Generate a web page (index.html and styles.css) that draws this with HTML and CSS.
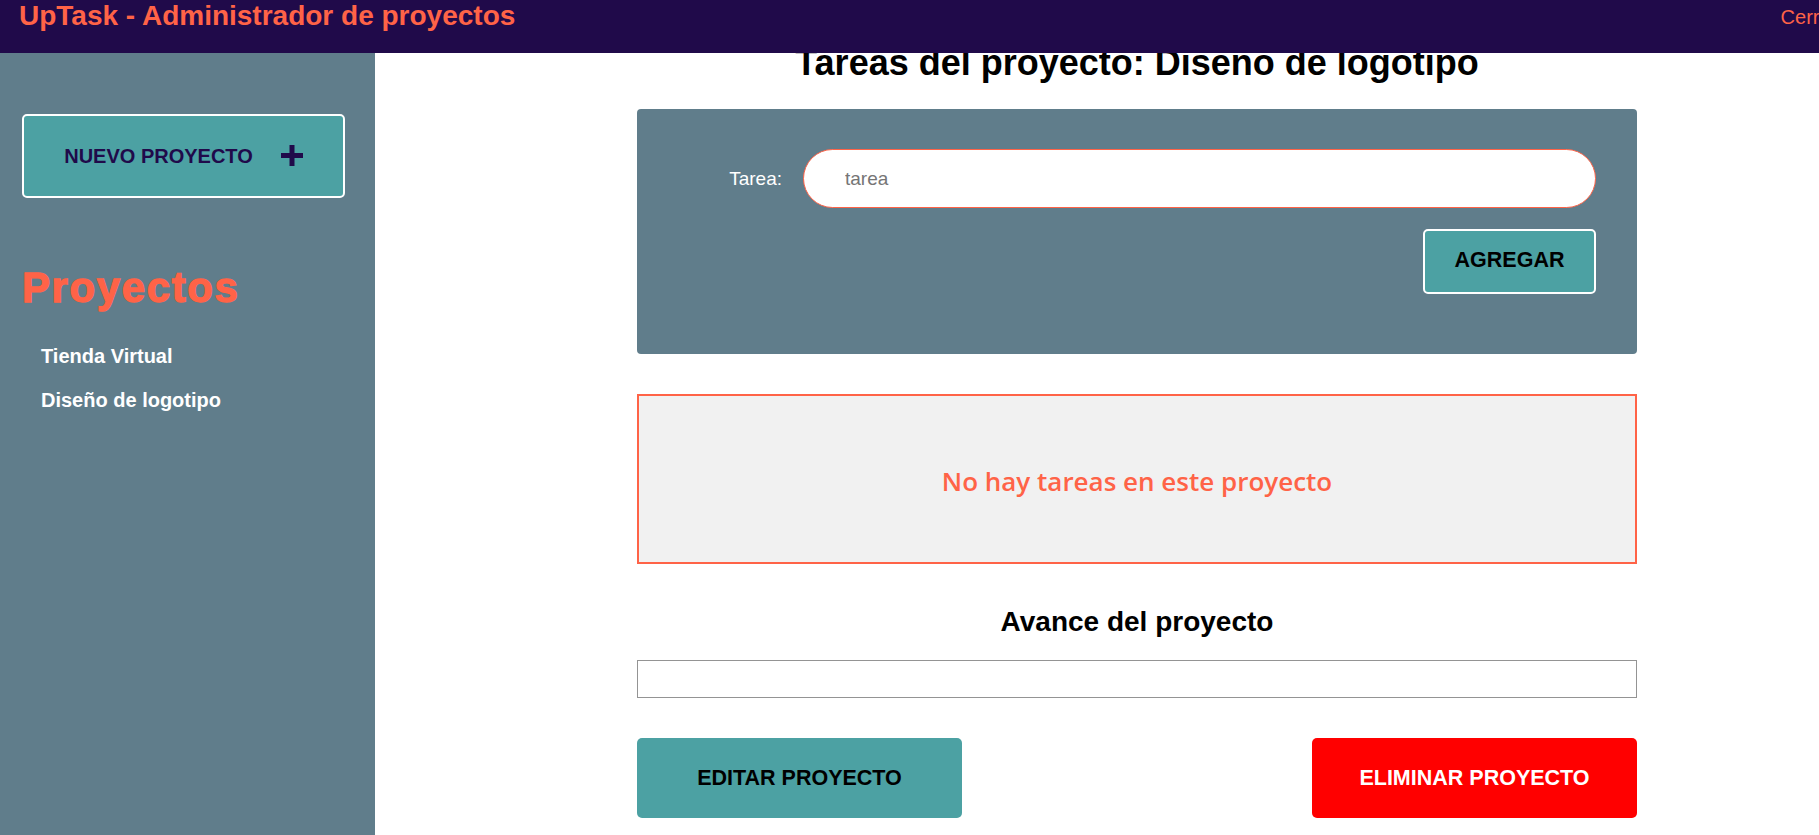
FILE: index.html
```html
<!DOCTYPE html>
<html lang="es">
<head>
<meta charset="utf-8">
<title>UpTask</title>
<link rel="stylesheet" href="styles.css">
</head>
<body>
<header class="topbar">
  <h1 class="brand">UpTask - Administrador de proyectos</h1>
  <a class="logout" href="#">Cerrar Sesión</a>
</header>
<div class="layout">
  <aside class="sidebar">
    <a class="new-project" href="#">
      <span>NUEVO PROYECTO</span>
      <svg class="plus" width="22" height="21" viewBox="0 0 22 21" aria-hidden="true"><rect x="0" y="8" width="22" height="5" fill="#200A4A"/><rect x="8.5" y="0" width="5" height="21" fill="#200A4A"/></svg>
    </a>
    <h2 class="sidebar-title">Proyectos</h2>
    <ul class="projects-list">
      <li><a href="#">Tienda Virtual</a></li>
      <li><a href="#">Diseño de logotipo</a></li>
    </ul>
  </aside>
  <main class="main">
    <div class="content">
      <h2 class="page-title">Tareas del proyecto: Diseño de logotipo</h2>
      <form class="task-form">
        <div class="field">
          <label for="tarea">Tarea:</label>
          <input id="tarea" type="text" placeholder="tarea">
        </div>
        <div class="form-actions">
          <button type="button" class="btn-add">AGREGAR</button>
        </div>
      </form>
      <div class="empty">
        <p>No hay tareas en este proyecto</p>
      </div>
      <h3 class="progress-title">Avance del proyecto</h3>
      <div class="progress"></div>
      <div class="project-actions">
        <button type="button" class="btn btn-edit">EDITAR PROYECTO</button>
        <button type="button" class="btn btn-delete">ELIMINAR PROYECTO</button>
      </div>
    </div>
  </main>
</div>
</body>
</html>
```
FILE: styles.css
```css
html, body {
  margin: 0;
  padding: 0;
  overflow: hidden;
}
body {
  font-family: "Liberation Sans", Arial, sans-serif;
  background: #ffffff;
  color: #000000;
}

.topbar {
  position: fixed;
  top: 0;
  left: 0;
  z-index: 10;
  width: 1924px;
  height: 53px;
  box-sizing: border-box;
  padding: 0 20px 0 19px;
  display: flex;
  justify-content: space-between;
  align-items: flex-start;
  background: #200A4A;
}
.brand {
  margin: 0;
  font-size: 28px;
  font-weight: bold;
  line-height: normal;
  color: #FF6347;
}
.logout {
  padding-top: 6px;
  font-size: 20px;
  color: #FF6347;
  text-decoration: none;
  line-height: normal;
}

/* Layout */
.layout {
  display: flex;
  min-height: 100vh;
}
.sidebar {
  width: 375px;
  flex-shrink: 0;
  box-sizing: border-box;
  padding: 114px 30px 0 22px;
  background: #607D8B;
}
.new-project {
  display: flex;
  align-items: center;
  justify-content: center;
  gap: 28px;
  height: 84px;
  box-sizing: border-box;
  border: 2px solid #ffffff;
  border-radius: 5px;
  background: #4CA1A3;
  color: #200A4A;
  font-weight: bold;
  font-size: 20px;
  text-decoration: none;
}
.plus {
  display: block;
  margin-top: -1px;
}
.sidebar-title {
  margin: 66px 0 0;
  font-size: 42px;
  line-height: normal;
  font-weight: 900;
  letter-spacing: 1.6px;
  color: #FF6347;
  -webkit-text-stroke: 1.3px #FF6347;
}
.projects-list {
  list-style: none;
  margin: 23px 0 0;
  padding: 0 0 0 19px;
}
.projects-list li {
  line-height: 42px;
}
.projects-list a {
  color: #ffffff;
  font-weight: bold;
  font-size: 20px;
  text-decoration: none;
}

/* Main */
.main {
  flex: 1;
  padding: 42px 0 0 80px;
}
.content {
  width: 1000px;
  margin: 0 auto;
}
.page-title {
  margin: 0 0 25px;
  text-align: center;
  font-size: 36px;
  line-height: normal;
  font-weight: bold;
}
.task-form {
  background: #607D8B;
  border-radius: 4px;
  padding: 40px 41px 60px 40px;
}
.field {
  display: flex;
  align-items: center;
  gap: 21px;
}
.field label {
  width: 105px;
  text-align: right;
  color: #ffffff;
  font-size: 19px;
}
.field input {
  flex: 1;
  height: 59px;
  box-sizing: border-box;
  border: 1px solid #FF6347;
  border-radius: 30px;
  padding: 0 41px;
  font-family: "Liberation Sans", Arial, sans-serif;
  font-size: 19px;
  background: #ffffff;
  outline: none;
}
.field input::placeholder {
  color: #757575;
}
.form-actions {
  display: flex;
  justify-content: flex-end;
  margin-top: 21px;
}
.btn-add {
  width: 173px;
  height: 65px;
  box-sizing: border-box;
  border: 2px solid #ffffff;
  border-radius: 5px;
  background: #4CA1A3;
  color: #000000;
  font-family: "Liberation Sans", Arial, sans-serif;
  font-weight: bold;
  font-size: 21.5px;
  padding: 0 0 2px;
}
.empty {
  margin-top: 40px;
  height: 170px;
  box-sizing: border-box;
  border: 2px solid #FF6347;
  background: #F1F1F1;
  display: flex;
  align-items: center;
  justify-content: center;
}
.empty p {
  margin: 4px 0 0;
  color: #FF6347;
  font-family: "Comic Sans MS", "Open Sans", sans-serif;
  font-weight: 600;
  font-size: 26px;
}
.progress-title {
  margin: 42px 0 22px;
  text-align: center;
  font-size: 28px;
  line-height: normal;
  font-weight: bold;
}
.progress {
  height: 38px;
  box-sizing: border-box;
  border: 1px solid #949494;
}
.project-actions {
  display: flex;
  justify-content: space-between;
  margin-top: 40px;
}
.btn {
  width: 325px;
  height: 80px;
  border: none;
  border-radius: 5px;
  font-family: "Liberation Sans", Arial, sans-serif;
  font-weight: bold;
  font-size: 21.5px;
  padding: 0;
}
.btn-edit {
  background: #4CA1A3;
  color: #000000;
}
.btn-delete {
  background: #FF0000;
  color: #ffffff;
}
```
